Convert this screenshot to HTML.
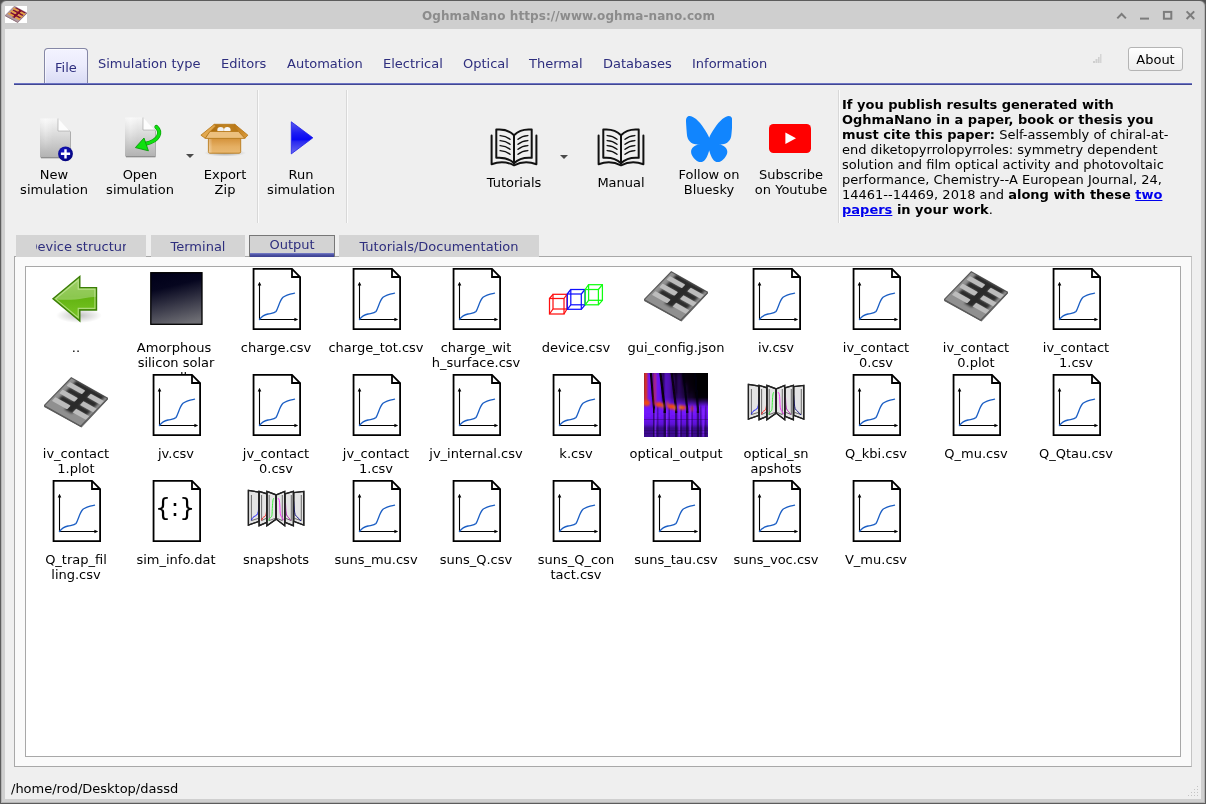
<!DOCTYPE html>
<html lang="en">
<head>
<meta charset="utf-8">
<title>OghmaNano</title>
<style>
html,body{margin:0;padding:0;}
body{width:1206px;height:804px;overflow:hidden;background:#505050;font-family:"DejaVu Sans","Liberation Sans",sans-serif;font-size:13px;color:#000;position:relative;}
#frame{position:absolute;left:0;top:0;width:1206px;height:804px;box-sizing:border-box;background:#cfcfcf;border:1px solid #5c5c5c;border-radius:6px 6px 0 0;box-shadow:inset 1px 0 0 #b4b4b4,inset -1px 0 0 #b4b4b4,inset 0 -1px 0 #b4b4b4;}
#content{position:absolute;left:5px;top:29px;width:1196px;height:770px;background:#efefef;}
#title{position:absolute;left:422px;top:8px;letter-spacing:0.078px;text-align:left;font-weight:bold;font-size:12px;color:#8c8c8c;line-height:16px;white-space:nowrap;}
.mt{position:absolute;top:56px;font-size:13px;color:#2e2e7e;line-height:16px;white-space:nowrap;}
#filetab{position:absolute;left:44px;top:48px;width:44px;height:36px;box-sizing:border-box;border:1px solid #8587a6;border-bottom:none;border-radius:4px 4px 0 0;background:linear-gradient(#f3f3ff,#ececfc 45%,#d9dbf5);box-shadow:inset 1px 1px 0 rgba(255,255,255,0.6);}
#blueline{position:absolute;left:14px;top:83px;width:1178px;height:2px;background:linear-gradient(#6d75c4,#6d75c4 50%,#414792 50%);}
#about{position:absolute;left:1128px;top:47px;width:55px;height:24px;box-sizing:border-box;border:1px solid #b4b4b4;border-radius:3px;background:linear-gradient(#ffffff,#ededed);text-align:center;line-height:23px;font-size:13px;}
.tl{position:absolute;text-align:center;font-size:13px;line-height:15px;white-space:nowrap;transform:translateX(-50%);}
.vsep{position:absolute;top:90px;width:1px;height:133px;background:#d8d8d8;border-right:1px solid #fbfbfb;}
.dd{position:absolute;width:0;height:0;border-left:4px solid transparent;border-right:4px solid transparent;border-top:4px solid #4a4a4a;}
#cite{position:absolute;left:842px;top:97px;width:345px;font-size:13px;line-height:15px;}
#cite a{color:#0000ee;font-weight:bold;text-decoration:underline;}
.tab{position:absolute;z-index:2;top:235px;height:22px;background:#d4d4d4;color:#2e2e7e;text-align:center;font-size:13px;line-height:24px;overflow:hidden;white-space:nowrap;}
#outtab{z-index:3;top:235px;height:22px;box-sizing:border-box;border:1px solid #777;border-bottom:none;line-height:17px;background:#d3d3d3;}
#outtab:after{content:"";position:absolute;left:0;right:0;bottom:0;height:4px;background:linear-gradient(#7c83cc,#4b51a2 45%,#3b4090);}
.clipt{display:inline-block;width:90.4px;margin-left:0.6px;overflow:hidden;vertical-align:top;text-indent:-8.6px;}
#panel{position:absolute;left:14px;top:256px;width:1178px;height:511px;box-sizing:border-box;border:1px solid #a8a8a8;border-right-color:#c4c4c4;background:#fafafa;}
#list{position:absolute;left:25px;top:266px;width:1156px;height:491px;box-sizing:border-box;border:1px solid #a8a8a8;background:#fff;}
.fl{position:absolute;width:100px;height:34px;text-align:center;font-size:13px;line-height:15px;overflow:hidden;white-space:normal;}
.ic{position:absolute;}
#status{position:absolute;left:11px;top:781px;font-size:13px;line-height:16px;}
#root{position:absolute;left:0;top:0;width:1206px;height:804px;will-change:transform;}
</style>
</head>
<body>
<div id="root">
<div id="frame"></div>
<div id="content"></div>
<div class="ic" style="left:5px;top:6px;"><svg width="22" height="17" viewBox="0 4.4 64 50.6" preserveAspectRatio="none" style="display:block;background:#fff"><defs><filter id="tcb38" x="-20%" y="-20%" width="140%" height="140%"><feGaussianBlur stdDeviation="0.022"/></filter><clipPath id="tcc38"><rect x="0" y="0" width="1" height="1"/></clipPath></defs><g transform="matrix(36.5 20.5 -27.1 27.9 27.3 4.8)"><rect x="0" y="0" width="1" height="1" fill="#b29aa0" stroke="#6e4a56" stroke-width="0.03"/><g clip-path="url(#tcc38)"><g filter="url(#tcb38)" fill="#7e102e"><rect x="0.43" y="0.02" width="0.2" height="0.8"/><rect x="0.14" y="0.0" width="0.78" height="0.13"/><rect x="0.14" y="0.24" width="0.78" height="0.16"/><rect x="0.14" y="0.52" width="0.78" height="0.15"/></g></g><g fill="#e8a040"><rect x="0.05" y="0.115" width="0.42" height="0.13" rx="0.02"/><rect x="0.05" y="0.385" width="0.42" height="0.13" rx="0.02"/><rect x="0.05" y="0.655" width="0.42" height="0.13" rx="0.02"/><rect x="0.62" y="0.115" width="0.36" height="0.13"/><rect x="0.62" y="0.385" width="0.36" height="0.13"/><rect x="0.62" y="0.655" width="0.36" height="0.13"/></g></g><path d="M0.2 32.7L37.5 53.2L63.8 25.3V26.6L37.5 54.6L0.2 34Z" fill="#6e4a56"/></svg></div>
<div id="title">OghmaNano https://www.oghma-nano.com</div>
<svg class="ic" style="left:1112px;top:6px;" width="90" height="18" viewBox="0 0 90 18"><g fill="none" stroke="#7c7c7c" stroke-width="2"><path d="M5.3 12.4L9.6 8L13.9 12.4"/><path d="M28 12.6H37"/><rect x="51.9" y="5.9" width="7.4" height="6.8"/><path d="M74.6 5.4L82.2 13M82.2 5.4L74.6 13"/></g></svg>

<div id="filetab"></div>
<div class="mt" style="left:55px;top:60px;">File</div>
<div class="mt" style="left:98px;">Simulation type</div>
<div class="mt" style="left:221px;">Editors</div>
<div class="mt" style="left:287px;">Automation</div>
<div class="mt" style="left:383px;">Electrical</div>
<div class="mt" style="left:463px;">Optical</div>
<div class="mt" style="left:529px;">Thermal</div>
<div class="mt" style="left:603px;">Databases</div>
<div class="mt" style="left:692px;">Information</div>
<div id="blueline"></div>
<svg class="ic" style="left:1092px;top:53px;" width="11" height="11" viewBox="0 0 11 11"><g fill="#cfcfcf"><rect x="1" y="8" width="2" height="2"/><rect x="3.5" y="6" width="2" height="4"/><rect x="6" y="4" width="1.6" height="6"/><rect x="8.2" y="1" width="1.2" height="9"/></g></svg>
<div id="about">About</div>

<div class="tl" style="left:54px;top:167px;">New<br>simulation</div>
<div class="tl" style="left:140px;top:167px;">Open<br>simulation</div>
<div class="tl" style="left:225px;top:167px;">Export<br>Zip</div>
<div class="tl" style="left:301px;top:167px;">Run<br>simulation</div>
<div class="tl" style="left:514px;top:175px;">Tutorials</div>
<div class="tl" style="left:621px;top:175px;">Manual</div>
<div class="tl" style="left:709px;top:167px;">Follow on<br>Bluesky</div>
<div class="tl" style="left:791px;top:167px;">Subscribe<br>on Youtube</div>
<div class="vsep" style="left:257px;"></div>
<div class="vsep" style="left:346px;"></div>
<div class="vsep" style="left:838px;"></div>
<div class="ic" style="left:36px;top:114px;"><svg width="44" height="50" viewBox="0 0 44 50" style="display:block;"><defs><linearGradient id="ndg32" x1="0" y1="0" x2="0" y2="1"><stop offset="0" stop-color="#f6f6f6"/><stop offset="0.3" stop-color="#e2e2e2"/><stop offset="1" stop-color="#b2b2b2"/></linearGradient><linearGradient id="ndh32" x1="0" y1="0" x2="1" y2="0"><stop offset="0" stop-color="#fff" stop-opacity="0.0"/><stop offset="0.3" stop-color="#fff" stop-opacity="0.5"/><stop offset="0.75" stop-color="#fff" stop-opacity="0"/></linearGradient><linearGradient id="ndv32" x1="0" y1="0" x2="0" y2="1"><stop offset="0" stop-color="#fff"/><stop offset="0.75" stop-color="#000"/></linearGradient><mask id="ndm32"><rect x="0" y="0" width="44" height="50" fill="url(#ndv32)"/></mask><filter id="nds32" x="-20%" y="-20%" width="140%" height="140%"><feGaussianBlur stdDeviation="0.5"/></filter></defs><path d="M4.5 5H22L34 17V43.5H4.5Z" fill="#000" opacity="0.55" filter="url(#nds32)" transform="translate(0.5 0.7)"/><path d="M4 4.5H22L34 17V43.5H4Z" fill="url(#ndg32)"/><path d="M4 4.5H22V43.5H4Z" fill="url(#ndh32)" mask="url(#ndm32)"/><path d="M22 4.5V17H34Z" fill="#fdfdfd"/><path d="M22 4.5V17H34" fill="none" stroke="#8a8a8a" stroke-width="0.8" opacity="0.6"/><defs><radialGradient id="ndc32" cx="0.4" cy="0.35" r="0.7"><stop offset="0" stop-color="#1818c8"/><stop offset="1" stop-color="#020278"/></radialGradient></defs><circle cx="29.5" cy="39.8" r="7.4" fill="url(#ndc32)"/><path d="M29.5 35.2V44.4M24.9 39.8H34.1" stroke="#fff" stroke-width="2.4" stroke-linecap="butt"/></svg></div>
<div class="ic" style="left:121px;top:113px;"><svg width="44" height="50" viewBox="0 0 44 50" style="display:block;"><defs><linearGradient id="odg33" x1="0" y1="0" x2="0" y2="1"><stop offset="0" stop-color="#f6f6f6"/><stop offset="0.3" stop-color="#e2e2e2"/><stop offset="1" stop-color="#b2b2b2"/></linearGradient><linearGradient id="odh33" x1="0" y1="0" x2="1" y2="0"><stop offset="0" stop-color="#fff" stop-opacity="0.0"/><stop offset="0.3" stop-color="#fff" stop-opacity="0.5"/><stop offset="0.75" stop-color="#fff" stop-opacity="0"/></linearGradient><linearGradient id="odv33" x1="0" y1="0" x2="0" y2="1"><stop offset="0" stop-color="#fff"/><stop offset="0.75" stop-color="#000"/></linearGradient><mask id="odm33"><rect x="0" y="0" width="44" height="50" fill="url(#odv33)"/></mask><filter id="ods33" x="-20%" y="-20%" width="140%" height="140%"><feGaussianBlur stdDeviation="0.5"/></filter></defs><path d="M4.5 5H22L34 17V43.5H4.5Z" fill="#000" opacity="0.55" filter="url(#ods33)" transform="translate(0.5 0.7)"/><path d="M4 4.5H22L34 17V43.5H4Z" fill="url(#odg33)"/><path d="M4 4.5H22V43.5H4Z" fill="url(#odh33)" mask="url(#odm33)"/><path d="M22 4.5V17H34Z" fill="#fdfdfd"/><path d="M22 4.5V17H34" fill="none" stroke="#8a8a8a" stroke-width="0.8" opacity="0.6"/><path d="M35.4 14C40.8 19 38.6 27.6 24.5 30.8" fill="none" stroke="#0a9a0a" stroke-width="4.1" stroke-linecap="round"/><path d="M35.4 14C40.8 19 38.6 27.6 24.5 30.8" fill="none" stroke="#10e010" stroke-width="2.9" stroke-linecap="round"/><path d="M14.4 34.6L23 25L27.4 37.8Z" fill="#10e010" stroke="#0a9a0a" stroke-width="0.9" stroke-linejoin="round"/></svg></div>
<div class="ic" style="left:199px;top:120px;"><svg width="52" height="40" viewBox="0 0 52 40" style="display:block;"><defs><linearGradient id="bxg34" x1="0" y1="0" x2="0" y2="1"><stop offset="0" stop-color="#d4923a"/><stop offset="0.55" stop-color="#e4ae62"/><stop offset="1" stop-color="#e9b972"/></linearGradient><linearGradient id="bxi34" x1="0" y1="0" x2="1" y2="0"><stop offset="0" stop-color="#a9690c"/><stop offset="0.5" stop-color="#c08220"/><stop offset="1" stop-color="#b87818"/></linearGradient><linearGradient id="bxr34" x1="0" y1="0" x2="1" y2="1"><stop offset="0" stop-color="#b87414"/><stop offset="1" stop-color="#dc9c3c"/></linearGradient><linearGradient id="bxl34" x1="0" y1="0" x2="1" y2="0"><stop offset="0" stop-color="#fff" stop-opacity="0.35"/><stop offset="0.12" stop-color="#fff" stop-opacity="0"/></linearGradient><radialGradient id="bxs34" cx="0.5" cy="0.5" r="0.5"><stop offset="0" stop-color="#000" stop-opacity="0.32"/><stop offset="1" stop-color="#000" stop-opacity="0"/></radialGradient></defs><ellipse cx="26" cy="33" rx="21" ry="3.6" fill="url(#bxs34)"/><path d="M15.3 4.3H35.8L40 12.5H10.5Z" fill="url(#bxi34)" stroke="#b87a1c" stroke-width="0.9" stroke-linejoin="round"/><ellipse cx="21.6" cy="9.9" rx="3.3" ry="2.9" fill="#f0f0f0"/><ellipse cx="28.3" cy="9.9" rx="3.3" ry="2.9" fill="#f8f8f8"/><path d="M15.3 4.3L1.9 15.2L6.3 18.3L11.2 11.5L16.6 6.2Z" fill="#e2a84e" stroke="#b87a1c" stroke-width="0.9" stroke-linejoin="round"/><path d="M35.8 4.3L48.9 15.2L45.8 18.3L39.3 11.5L34.6 6.2Z" fill="url(#bxr34)" stroke="#b87a1c" stroke-width="0.9" stroke-linejoin="round"/><path d="M9.4 18.2H41.7V31.6Q41.7 33.2 40.1 33.2H11Q9.4 33.2 9.4 31.6Z" fill="url(#bxg34)" stroke="#b87a1c" stroke-width="0.9"/><path d="M9.9 18.7H41.2V32.7H9.9Z" fill="url(#bxl34)"/><path d="M10.9 11.5H39.5L45.8 18.4H6.3Z" fill="#ecc07e" stroke="#b87a1c" stroke-width="0.9" stroke-linejoin="round"/></svg></div>
<div class="ic" style="left:289.5px;top:120px;"><svg width="26" height="36" viewBox="0 0 26 36" style="display:block;"><defs><linearGradient id="rg35" x1="0" y1="0" x2="0" y2="1"><stop offset="0" stop-color="#5a5aee"/><stop offset="0.35" stop-color="#1c1cf2"/><stop offset="0.55" stop-color="#0808f4"/><stop offset="0.62" stop-color="#2a2af0"/><stop offset="1" stop-color="#6a6af0"/></linearGradient></defs><path d="M1.3 1.8L22.9 17.8L1.3 33.9Z" fill="url(#rg35)" stroke="#2020e8" stroke-width="0.8" stroke-linejoin="round"/></svg></div>
<div class="ic" style="left:490px;top:127.5px;"><svg width="48" height="39" viewBox="0 0 48 39" style="display:block;"><g fill="none" stroke="#111" stroke-width="2" stroke-linejoin="round" stroke-linecap="round"><path d="M1.6 7.5V36.2C9 33.6 17 33.8 24 37.3C31 33.8 39 33.6 46.4 36.2V7.5"/><path d="M24 7.2C19.5 2.6 13 0.9 6.3 1.6V29.8C13 29.2 19.5 30.8 24 35.2C28.5 30.8 35 29.2 41.7 29.8V1.6C35 0.9 28.5 2.6 24 7.2Z"/><path d="M24 7.2V35.2"/></g><g fill="none" stroke="#111" stroke-width="1.45" stroke-linecap="round"><path d="M10.2 7.6C14 7.8 17.2 9 20 11.2M10.2 12.6C14 12.8 17.2 14 20 16.2M10.2 17.6C14 17.8 17.2 19 20 21.2M10.2 22.6C14 22.8 17.2 24 20 26.2"/><path d="M37.8 7.6C34 7.8 30.8 9 28 11.2M37.8 12.6C34 12.8 30.8 14 28 16.2M37.8 17.6C34 17.8 30.8 19 28 21.2M37.8 22.6C34 22.8 30.8 24 28 26.2"/></g></svg></div>
<div class="ic" style="left:597px;top:127.5px;"><svg width="48" height="39" viewBox="0 0 48 39" style="display:block;"><g fill="none" stroke="#111" stroke-width="2" stroke-linejoin="round" stroke-linecap="round"><path d="M1.6 7.5V36.2C9 33.6 17 33.8 24 37.3C31 33.8 39 33.6 46.4 36.2V7.5"/><path d="M24 7.2C19.5 2.6 13 0.9 6.3 1.6V29.8C13 29.2 19.5 30.8 24 35.2C28.5 30.8 35 29.2 41.7 29.8V1.6C35 0.9 28.5 2.6 24 7.2Z"/><path d="M24 7.2V35.2"/></g><g fill="none" stroke="#111" stroke-width="1.45" stroke-linecap="round"><path d="M10.2 7.6C14 7.8 17.2 9 20 11.2M10.2 12.6C14 12.8 17.2 14 20 16.2M10.2 17.6C14 17.8 17.2 19 20 21.2M10.2 22.6C14 22.8 17.2 24 20 26.2"/><path d="M37.8 7.6C34 7.8 30.8 9 28 11.2M37.8 12.6C34 12.8 30.8 14 28 16.2M37.8 17.6C34 17.8 30.8 19 28 21.2M37.8 22.6C34 22.8 30.8 24 28 26.2"/></g></svg></div>
<div class="ic" style="left:685.6px;top:116px;"><svg width="46.4" height="46.3" viewBox="0 0 568 501" preserveAspectRatio="none" style="display:block"><path fill="#1185fe" d="M123.121 33.664C188.241 82.553 258.281 181.68 284 234.873c25.719-53.192 95.759-152.32 160.879-201.21C491.866-1.611 568-28.906 568 57.947c0 17.346-9.945 145.713-15.778 166.555-20.275 72.453-94.155 90.933-159.875 79.748C507.222 323.8 536.444 388.56 473.333 453.32c-119.86 122.992-172.272-30.859-185.702-70.281-2.462-7.227-3.614-10.608-3.631-7.733-.017-2.875-1.169.506-3.631 7.733-13.43 39.422-65.842 193.273-185.702 70.281-63.111-64.76-33.89-129.52 80.986-149.071-65.72 11.185-139.6-7.295-159.875-79.748C9.945 203.659 0 75.291 0 57.946 0-28.906 76.135-1.612 123.121 33.664Z"/></svg></div>
<div class="ic" style="left:769px;top:124px;"><svg width="42" height="29" viewBox="0 0 42 29" style="display:block;"><rect x="0" y="0" width="42" height="29" rx="4.5" fill="#ff0000"/><path d="M16.4 8.4L27 14.2L16.4 20Z" fill="#fff"/></svg></div>
<div class="dd" style="left:186px;top:154px;"></div><div class="dd" style="left:560px;top:155px;"></div>

<div id="cite"><b>If you publish results generated with OghmaNano in a paper, book or thesis you must cite this paper:</b> Self-assembly of chiral-at-end diketopyrrolopyrroles: symmetry dependent solution and film optical activity and photovoltaic performance, Chemistry--A European Journal, 24, 14461--14469, 2018 and <b>along with these <a>two papers</a> in your work</b>.</div>

<div class="tab" style="left:16px;width:130px;"><span class="clipt">Device structure</span></div>
<div class="tab" style="left:151px;width:94px;">Terminal</div>
<div class="tab" id="outtab" style="left:249px;width:86px;">Output</div>
<div class="tab" style="left:339px;width:200px;">Tutorials/Documentation</div>
<div id="panel"></div>
<div id="list"></div>

<div class="ic" style="left:44px;top:267px;"><svg width="64" height="64" viewBox="0 0 64 64" style="display:block;"><defs><linearGradient id="bkg1" x1="0" y1="0" x2="0" y2="1"><stop offset="0" stop-color="#7cc030"/><stop offset="0.45" stop-color="#62b310"/><stop offset="1" stop-color="#7cc828"/></linearGradient><radialGradient id="bks1" cx="0.5" cy="0.5" r="0.5"><stop offset="0" stop-color="#000" stop-opacity="0.24"/><stop offset="0.6" stop-color="#000" stop-opacity="0.1"/><stop offset="1" stop-color="#000" stop-opacity="0"/></radialGradient><clipPath id="bkc1"><path d="M9 31.8L35.8 9.5V20.6H52.5V43H35.8V54Z"/></clipPath></defs><ellipse cx="35" cy="48.5" rx="23" ry="7.5" fill="url(#bks1)"/><path d="M9 31.8L35.8 9.5V20.6H52.5V43H35.8V54Z" fill="url(#bkg1)"/><path d="M0 0H64V30.2C56 29.2 48 29.6 40 31.2C31 33 20 33.4 6 31.9Z" fill="#fff" opacity="0.27" clip-path="url(#bkc1)"/><path d="M9 31.8L35.8 9.5V20.6H52.5V43H35.8V54Z" fill="none" stroke="#3a7d06" stroke-width="1.4" stroke-linejoin="miter"/><path d="M11.6 31.8L34.2 13V22.2H50.9V41.4H34.2V50.6Z" fill="none" stroke="#c8e8a0" stroke-opacity="0.7" stroke-width="1.1"/></svg></div>
<div class="fl" style="left:26px;top:340px;">..</div>
<div class="ic" style="left:144px;top:267px;"><svg width="64" height="64" viewBox="0 0 64 64" style="display:block;"><defs><linearGradient id="slg2" x1="0.38" y1="0" x2="0.62" y2="1"><stop offset="0" stop-color="#01011a"/><stop offset="0.25" stop-color="#06061f"/><stop offset="1" stop-color="#6e6e74"/></linearGradient></defs><rect x="6.8" y="5.7" width="51.2" height="51.6" fill="url(#slg2)" stroke="#000" stroke-width="1.3"/></svg></div>
<div class="fl" style="left:126px;top:340px;"><span style="position:relative;left:-2px">Amorphous</span> silicon solar cell</div>
<div class="ic" style="left:244px;top:267px;"><svg width="64" height="64" viewBox="0 0 64 64" style="display:block;"><path d="M9.55 1.9H48L56.1 10V62.1H9.55Z" fill="#fff" stroke="#000" stroke-width="1.8" stroke-linejoin="miter"/><path d="M48 1.9V10H56.1" fill="none" stroke="#000" stroke-width="1.8"/><path d="M15.5 17V52.5H52" fill="none" stroke="#000" stroke-width="1.1"/><path d="M15.5 14.8L17.3 18.6H13.7Z M54.2 52.5L50.4 54.3V50.7Z" fill="#000"/><path d="M15.5 52.5C18 49 21 47.6 24 47C28 46.2 30.5 46.2 32 44.5C34.5 41 35.5 33.5 39 30.3C42 27.6 46 27 50.5 26.2" fill="none" stroke="#1c5fc4" stroke-width="1.3" stroke-linecap="round"/></svg></div>
<div class="fl" style="left:226px;top:340px;">charge.csv</div>
<div class="ic" style="left:344px;top:267px;"><svg width="64" height="64" viewBox="0 0 64 64" style="display:block;"><path d="M9.55 1.9H48L56.1 10V62.1H9.55Z" fill="#fff" stroke="#000" stroke-width="1.8" stroke-linejoin="miter"/><path d="M48 1.9V10H56.1" fill="none" stroke="#000" stroke-width="1.8"/><path d="M15.5 17V52.5H52" fill="none" stroke="#000" stroke-width="1.1"/><path d="M15.5 14.8L17.3 18.6H13.7Z M54.2 52.5L50.4 54.3V50.7Z" fill="#000"/><path d="M15.5 52.5C18 49 21 47.6 24 47C28 46.2 30.5 46.2 32 44.5C34.5 41 35.5 33.5 39 30.3C42 27.6 46 27 50.5 26.2" fill="none" stroke="#1c5fc4" stroke-width="1.3" stroke-linecap="round"/></svg></div>
<div class="fl" style="left:326px;top:340px;">charge_tot.csv</div>
<div class="ic" style="left:444px;top:267px;"><svg width="64" height="64" viewBox="0 0 64 64" style="display:block;"><path d="M9.55 1.9H48L56.1 10V62.1H9.55Z" fill="#fff" stroke="#000" stroke-width="1.8" stroke-linejoin="miter"/><path d="M48 1.9V10H56.1" fill="none" stroke="#000" stroke-width="1.8"/><path d="M15.5 17V52.5H52" fill="none" stroke="#000" stroke-width="1.1"/><path d="M15.5 14.8L17.3 18.6H13.7Z M54.2 52.5L50.4 54.3V50.7Z" fill="#000"/><path d="M15.5 52.5C18 49 21 47.6 24 47C28 46.2 30.5 46.2 32 44.5C34.5 41 35.5 33.5 39 30.3C42 27.6 46 27 50.5 26.2" fill="none" stroke="#1c5fc4" stroke-width="1.3" stroke-linecap="round"/></svg></div>
<div class="fl" style="left:426px;top:340px;">charge_wit<wbr>h_surface.csv</div>
<div class="ic" style="left:544px;top:267px;"><svg width="64" height="64" viewBox="0 0 64 64" style="display:block;"><g fill="none" stroke-width="1.25"><g stroke="#ff1010"><rect x="5.5" y="31.5" width="14.5" height="15.5"/><rect x="9" y="27.3" width="14" height="14.7"/><path d="M5.5 31.5L9 27.3M20 31.5L23 27.3M5.5 47L9 42M20 47L23 42"/></g><g stroke="#1010ff"><rect x="23.3" y="27" width="14" height="15.3"/><rect x="26.8" y="22.5" width="14.2" height="15.3"/><path d="M23.3 27L26.8 22.5M37.3 27L41 22.5M23.3 42.3L26.8 37.8M37.3 42.3L41 37.8"/></g><g stroke="#10ff10"><rect x="41.2" y="22.5" width="13.2" height="15.3"/><rect x="44.6" y="17.7" width="13.8" height="15.6"/><path d="M41.2 22.5L44.6 17.7M54.4 22.5L58.4 17.7M41.2 37.8L44.6 33.3M54.4 37.8L58.4 33.3"/></g></g></svg></div>
<div class="fl" style="left:526px;top:340px;">device.csv</div>
<div class="ic" style="left:644px;top:267px;"><svg width="64" height="64" viewBox="0 0 64 64" style="display:block;"><defs><filter id="cgb7" x="-20%" y="-20%" width="140%" height="140%"><feGaussianBlur stdDeviation="0.022"/></filter><clipPath id="cgc7"><rect x="0" y="0" width="1" height="1"/></clipPath></defs><g transform="matrix(36.5 20.5 -27.1 27.9 27.3 4.8)"><rect x="0" y="0" width="1" height="1" fill="#909090" stroke="#5a5a5a" stroke-width="0.03"/><g clip-path="url(#cgc7)"><g filter="url(#cgb7)" fill="#2c2c2c"><rect x="0.43" y="0.02" width="0.2" height="0.8"/><rect x="0.14" y="0.0" width="0.78" height="0.13"/><rect x="0.14" y="0.24" width="0.78" height="0.16"/><rect x="0.14" y="0.52" width="0.78" height="0.15"/></g></g><g fill="#bcbcbc"><rect x="0.05" y="0.115" width="0.42" height="0.13" rx="0.02"/><rect x="0.05" y="0.385" width="0.42" height="0.13" rx="0.02"/><rect x="0.05" y="0.655" width="0.42" height="0.13" rx="0.02"/><rect x="0.62" y="0.115" width="0.36" height="0.13"/><rect x="0.62" y="0.385" width="0.36" height="0.13"/><rect x="0.62" y="0.655" width="0.36" height="0.13"/></g></g><path d="M0.2 32.7L37.5 53.2L63.8 25.3V26.6L37.5 54.6L0.2 34Z" fill="#5a5a5a"/></svg></div>
<div class="fl" style="left:626px;top:340px;">gui_config.json</div>
<div class="ic" style="left:744px;top:267px;"><svg width="64" height="64" viewBox="0 0 64 64" style="display:block;"><path d="M9.55 1.9H48L56.1 10V62.1H9.55Z" fill="#fff" stroke="#000" stroke-width="1.8" stroke-linejoin="miter"/><path d="M48 1.9V10H56.1" fill="none" stroke="#000" stroke-width="1.8"/><path d="M15.5 17V52.5H52" fill="none" stroke="#000" stroke-width="1.1"/><path d="M15.5 14.8L17.3 18.6H13.7Z M54.2 52.5L50.4 54.3V50.7Z" fill="#000"/><path d="M15.5 52.5C18 49 21 47.6 24 47C28 46.2 30.5 46.2 32 44.5C34.5 41 35.5 33.5 39 30.3C42 27.6 46 27 50.5 26.2" fill="none" stroke="#1c5fc4" stroke-width="1.3" stroke-linecap="round"/></svg></div>
<div class="fl" style="left:726px;top:340px;">iv.csv</div>
<div class="ic" style="left:844px;top:267px;"><svg width="64" height="64" viewBox="0 0 64 64" style="display:block;"><path d="M9.55 1.9H48L56.1 10V62.1H9.55Z" fill="#fff" stroke="#000" stroke-width="1.8" stroke-linejoin="miter"/><path d="M48 1.9V10H56.1" fill="none" stroke="#000" stroke-width="1.8"/><path d="M15.5 17V52.5H52" fill="none" stroke="#000" stroke-width="1.1"/><path d="M15.5 14.8L17.3 18.6H13.7Z M54.2 52.5L50.4 54.3V50.7Z" fill="#000"/><path d="M15.5 52.5C18 49 21 47.6 24 47C28 46.2 30.5 46.2 32 44.5C34.5 41 35.5 33.5 39 30.3C42 27.6 46 27 50.5 26.2" fill="none" stroke="#1c5fc4" stroke-width="1.3" stroke-linecap="round"/></svg></div>
<div class="fl" style="left:826px;top:340px;">iv_contact<wbr>0.csv</div>
<div class="ic" style="left:944px;top:267px;"><svg width="64" height="64" viewBox="0 0 64 64" style="display:block;"><defs><filter id="cgb10" x="-20%" y="-20%" width="140%" height="140%"><feGaussianBlur stdDeviation="0.022"/></filter><clipPath id="cgc10"><rect x="0" y="0" width="1" height="1"/></clipPath></defs><g transform="matrix(36.5 20.5 -27.1 27.9 27.3 4.8)"><rect x="0" y="0" width="1" height="1" fill="#909090" stroke="#5a5a5a" stroke-width="0.03"/><g clip-path="url(#cgc10)"><g filter="url(#cgb10)" fill="#2c2c2c"><rect x="0.43" y="0.02" width="0.2" height="0.8"/><rect x="0.14" y="0.0" width="0.78" height="0.13"/><rect x="0.14" y="0.24" width="0.78" height="0.16"/><rect x="0.14" y="0.52" width="0.78" height="0.15"/></g></g><g fill="#bcbcbc"><rect x="0.05" y="0.115" width="0.42" height="0.13" rx="0.02"/><rect x="0.05" y="0.385" width="0.42" height="0.13" rx="0.02"/><rect x="0.05" y="0.655" width="0.42" height="0.13" rx="0.02"/><rect x="0.62" y="0.115" width="0.36" height="0.13"/><rect x="0.62" y="0.385" width="0.36" height="0.13"/><rect x="0.62" y="0.655" width="0.36" height="0.13"/></g></g><path d="M0.2 32.7L37.5 53.2L63.8 25.3V26.6L37.5 54.6L0.2 34Z" fill="#5a5a5a"/></svg></div>
<div class="fl" style="left:926px;top:340px;">iv_contact<wbr>0.plot</div>
<div class="ic" style="left:1044px;top:267px;"><svg width="64" height="64" viewBox="0 0 64 64" style="display:block;"><path d="M9.55 1.9H48L56.1 10V62.1H9.55Z" fill="#fff" stroke="#000" stroke-width="1.8" stroke-linejoin="miter"/><path d="M48 1.9V10H56.1" fill="none" stroke="#000" stroke-width="1.8"/><path d="M15.5 17V52.5H52" fill="none" stroke="#000" stroke-width="1.1"/><path d="M15.5 14.8L17.3 18.6H13.7Z M54.2 52.5L50.4 54.3V50.7Z" fill="#000"/><path d="M15.5 52.5C18 49 21 47.6 24 47C28 46.2 30.5 46.2 32 44.5C34.5 41 35.5 33.5 39 30.3C42 27.6 46 27 50.5 26.2" fill="none" stroke="#1c5fc4" stroke-width="1.3" stroke-linecap="round"/></svg></div>
<div class="fl" style="left:1026px;top:340px;">iv_contact<wbr>1.csv</div>
<div class="ic" style="left:44px;top:373px;"><svg width="64" height="64" viewBox="0 0 64 64" style="display:block;"><defs><filter id="cgb12" x="-20%" y="-20%" width="140%" height="140%"><feGaussianBlur stdDeviation="0.022"/></filter><clipPath id="cgc12"><rect x="0" y="0" width="1" height="1"/></clipPath></defs><g transform="matrix(36.5 20.5 -27.1 27.9 27.3 4.8)"><rect x="0" y="0" width="1" height="1" fill="#909090" stroke="#5a5a5a" stroke-width="0.03"/><g clip-path="url(#cgc12)"><g filter="url(#cgb12)" fill="#2c2c2c"><rect x="0.43" y="0.02" width="0.2" height="0.8"/><rect x="0.14" y="0.0" width="0.78" height="0.13"/><rect x="0.14" y="0.24" width="0.78" height="0.16"/><rect x="0.14" y="0.52" width="0.78" height="0.15"/></g></g><g fill="#bcbcbc"><rect x="0.05" y="0.115" width="0.42" height="0.13" rx="0.02"/><rect x="0.05" y="0.385" width="0.42" height="0.13" rx="0.02"/><rect x="0.05" y="0.655" width="0.42" height="0.13" rx="0.02"/><rect x="0.62" y="0.115" width="0.36" height="0.13"/><rect x="0.62" y="0.385" width="0.36" height="0.13"/><rect x="0.62" y="0.655" width="0.36" height="0.13"/></g></g><path d="M0.2 32.7L37.5 53.2L63.8 25.3V26.6L37.5 54.6L0.2 34Z" fill="#5a5a5a"/></svg></div>
<div class="fl" style="left:26px;top:446px;">iv_contact<wbr>1.plot</div>
<div class="ic" style="left:144px;top:373px;"><svg width="64" height="64" viewBox="0 0 64 64" style="display:block;"><path d="M9.55 1.9H48L56.1 10V62.1H9.55Z" fill="#fff" stroke="#000" stroke-width="1.8" stroke-linejoin="miter"/><path d="M48 1.9V10H56.1" fill="none" stroke="#000" stroke-width="1.8"/><path d="M15.5 17V52.5H52" fill="none" stroke="#000" stroke-width="1.1"/><path d="M15.5 14.8L17.3 18.6H13.7Z M54.2 52.5L50.4 54.3V50.7Z" fill="#000"/><path d="M15.5 52.5C18 49 21 47.6 24 47C28 46.2 30.5 46.2 32 44.5C34.5 41 35.5 33.5 39 30.3C42 27.6 46 27 50.5 26.2" fill="none" stroke="#1c5fc4" stroke-width="1.3" stroke-linecap="round"/></svg></div>
<div class="fl" style="left:126px;top:446px;">jv.csv</div>
<div class="ic" style="left:244px;top:373px;"><svg width="64" height="64" viewBox="0 0 64 64" style="display:block;"><path d="M9.55 1.9H48L56.1 10V62.1H9.55Z" fill="#fff" stroke="#000" stroke-width="1.8" stroke-linejoin="miter"/><path d="M48 1.9V10H56.1" fill="none" stroke="#000" stroke-width="1.8"/><path d="M15.5 17V52.5H52" fill="none" stroke="#000" stroke-width="1.1"/><path d="M15.5 14.8L17.3 18.6H13.7Z M54.2 52.5L50.4 54.3V50.7Z" fill="#000"/><path d="M15.5 52.5C18 49 21 47.6 24 47C28 46.2 30.5 46.2 32 44.5C34.5 41 35.5 33.5 39 30.3C42 27.6 46 27 50.5 26.2" fill="none" stroke="#1c5fc4" stroke-width="1.3" stroke-linecap="round"/></svg></div>
<div class="fl" style="left:226px;top:446px;">jv_contact<wbr>0.csv</div>
<div class="ic" style="left:344px;top:373px;"><svg width="64" height="64" viewBox="0 0 64 64" style="display:block;"><path d="M9.55 1.9H48L56.1 10V62.1H9.55Z" fill="#fff" stroke="#000" stroke-width="1.8" stroke-linejoin="miter"/><path d="M48 1.9V10H56.1" fill="none" stroke="#000" stroke-width="1.8"/><path d="M15.5 17V52.5H52" fill="none" stroke="#000" stroke-width="1.1"/><path d="M15.5 14.8L17.3 18.6H13.7Z M54.2 52.5L50.4 54.3V50.7Z" fill="#000"/><path d="M15.5 52.5C18 49 21 47.6 24 47C28 46.2 30.5 46.2 32 44.5C34.5 41 35.5 33.5 39 30.3C42 27.6 46 27 50.5 26.2" fill="none" stroke="#1c5fc4" stroke-width="1.3" stroke-linecap="round"/></svg></div>
<div class="fl" style="left:326px;top:446px;">jv_contact<wbr>1.csv</div>
<div class="ic" style="left:444px;top:373px;"><svg width="64" height="64" viewBox="0 0 64 64" style="display:block;"><path d="M9.55 1.9H48L56.1 10V62.1H9.55Z" fill="#fff" stroke="#000" stroke-width="1.8" stroke-linejoin="miter"/><path d="M48 1.9V10H56.1" fill="none" stroke="#000" stroke-width="1.8"/><path d="M15.5 17V52.5H52" fill="none" stroke="#000" stroke-width="1.1"/><path d="M15.5 14.8L17.3 18.6H13.7Z M54.2 52.5L50.4 54.3V50.7Z" fill="#000"/><path d="M15.5 52.5C18 49 21 47.6 24 47C28 46.2 30.5 46.2 32 44.5C34.5 41 35.5 33.5 39 30.3C42 27.6 46 27 50.5 26.2" fill="none" stroke="#1c5fc4" stroke-width="1.3" stroke-linecap="round"/></svg></div>
<div class="fl" style="left:426px;top:446px;">jv_internal.csv</div>
<div class="ic" style="left:544px;top:373px;"><svg width="64" height="64" viewBox="0 0 64 64" style="display:block;"><path d="M9.55 1.9H48L56.1 10V62.1H9.55Z" fill="#fff" stroke="#000" stroke-width="1.8" stroke-linejoin="miter"/><path d="M48 1.9V10H56.1" fill="none" stroke="#000" stroke-width="1.8"/><path d="M15.5 17V52.5H52" fill="none" stroke="#000" stroke-width="1.1"/><path d="M15.5 14.8L17.3 18.6H13.7Z M54.2 52.5L50.4 54.3V50.7Z" fill="#000"/><path d="M15.5 52.5C18 49 21 47.6 24 47C28 46.2 30.5 46.2 32 44.5C34.5 41 35.5 33.5 39 30.3C42 27.6 46 27 50.5 26.2" fill="none" stroke="#1c5fc4" stroke-width="1.3" stroke-linecap="round"/></svg></div>
<div class="fl" style="left:526px;top:446px;">k.csv</div>
<div class="ic" style="left:644px;top:373px;"><svg width="64" height="64" viewBox="0 0 64 64" style="display:block;"><defs><filter id="ob118" x="-30%" y="-30%" width="160%" height="160%"><feGaussianBlur stdDeviation="0.9"/></filter><filter id="ob418" x="-30%" y="-30%" width="160%" height="160%"><feGaussianBlur stdDeviation="0.55"/></filter><filter id="ob218" x="-30%" y="-30%" width="160%" height="160%"><feGaussianBlur stdDeviation="0.9 3"/></filter><filter id="ob318" x="-30%" y="-30%" width="160%" height="160%"><feGaussianBlur stdDeviation="0.6 1.2"/></filter><linearGradient id="ov18" x1="0" y1="0" x2="0" y2="1"><stop offset="0" stop-color="#12001f"/><stop offset="0.3" stop-color="#1c0338"/><stop offset="0.47" stop-color="#5a12c8"/><stop offset="0.56" stop-color="#7a18ff"/><stop offset="0.72" stop-color="#6a12ee"/><stop offset="0.8" stop-color="#5c10d4"/><stop offset="0.86" stop-color="#3a0a8a"/><stop offset="1" stop-color="#3c0a90"/></linearGradient><linearGradient id="oh18" x1="0" y1="0" x2="1" y2="0"><stop offset="0.2" stop-color="#000" stop-opacity="0"/><stop offset="0.5" stop-color="#000" stop-opacity="0.4"/><stop offset="0.85" stop-color="#000" stop-opacity="0.95"/></linearGradient><linearGradient id="ofade18" x1="0" y1="0" x2="0" y2="1"><stop offset="0" stop-color="#fff"/><stop offset="0.38" stop-color="#fff"/><stop offset="0.52" stop-color="#000"/></linearGradient><mask id="om18"><rect width="64" height="64" fill="url(#ofade18)"/></mask><clipPath id="oc18"><rect width="64" height="64"/></clipPath></defs><g clip-path="url(#oc18)"><rect width="64" height="64" fill="url(#ov18)"/><g filter="url(#ob218)" fill="#7016fa"><rect x="1" y="-4" width="7" height="46" opacity="1"/><rect x="9" y="-4" width="9" height="46" opacity="1"/><rect x="20" y="-4" width="7" height="46" opacity="0.95"/><rect x="26" y="2" width="5" height="40" opacity="0.6"/><rect x="33" y="0" width="5" height="42" opacity="0.6"/><rect x="38" y="12" width="6" height="30" opacity="0.45"/><rect x="46" y="18" width="5" height="24" opacity="0.4"/><rect x="57" y="24" width="5" height="18" opacity="0.4"/></g><rect width="64" height="64" fill="url(#oh18)" mask="url(#om18)"/><g filter="url(#ob418)" fill="#07000e"><path d="M5.6 -2H7.699999999999999L11.1 36V40H9.0V36Z" opacity="1"/><rect x="9.0" y="38" width="2.1" height="28" opacity="0.5"/><path d="M15.0 -2H17.3L21.900000000000002 36V40H19.6V36Z" opacity="1"/><rect x="19.6" y="38" width="2.3" height="28" opacity="0.5"/><path d="M26.4 -2H28.599999999999998L33.2 36V40H31.0V36Z" opacity="0.95"/><rect x="31.0" y="38" width="2.2" height="28" opacity="0.5"/><path d="M38.0 -2H40.2L44.300000000000004 36V40H42.1V36Z" opacity="0.9"/><rect x="42.1" y="38" width="2.2" height="28" opacity="0.5"/><path d="M49.8 -2H52.099999999999994L55.099999999999994 36V40H52.8V36Z" opacity="0.85"/><rect x="52.8" y="38" width="2.3" height="28" opacity="0.5"/></g><g filter="url(#ob318)" fill="#0a0014" opacity="0.33"><rect x="13" y="33" width="1.5" height="34"/><rect x="24.5" y="33" width="1.5" height="34"/><rect x="36.5" y="33" width="1.5" height="34"/><rect x="47.5" y="33" width="1.5" height="34"/><rect x="56" y="33" width="1.5" height="34"/><rect x="61" y="33" width="1.5" height="34"/></g><g filter="url(#ob318)" fill="#8a2aff" opacity="0.75"><rect x="10.5" y="36" width="1.3" height="28"/><rect x="22" y="36" width="1.3" height="28"/><rect x="34.5" y="36" width="1.3" height="28"/><rect x="45.5" y="36" width="1.3" height="28"/><rect x="58.5" y="36" width="1.3" height="28"/></g><g filter="url(#ob118)"><rect x="0" y="-2" width="3.2" height="34" fill="#e83808"/><rect x="10" y="0" width="1.5" height="32" fill="#e03010"/><ellipse cx="2.5" cy="30" rx="3.6" ry="3" fill="#f04a08"/><ellipse cx="15" cy="31.5" rx="3.2" ry="2.6" fill="#f04a08"/><ellipse cx="18.8" cy="33" rx="0.9" ry="3" fill="#f06a10"/><ellipse cx="27.5" cy="33.5" rx="3.6" ry="2.6" fill="#f04a08"/><ellipse cx="30.8" cy="35" rx="0.9" ry="3" fill="#f07a10"/><ellipse cx="23.6" cy="31" rx="0.8" ry="3" fill="#f06010"/><ellipse cx="38.5" cy="34.6" rx="3.2" ry="2.2" fill="#f05008"/><ellipse cx="36" cy="34" rx="0.9" ry="2.6" fill="#f89018"/><ellipse cx="48" cy="35.5" rx="0.9" ry="3" fill="#e84010"/></g><rect x="0" y="46.3" width="64" height="0.6" fill="#200040" opacity="0.55"/><rect x="0" y="57.5" width="64" height="0.5" fill="#180030" opacity="0.4"/><rect x="0" y="60.5" width="64" height="0.5" fill="#180030" opacity="0.4"/></g></svg></div>
<div class="fl" style="left:626px;top:446px;">optical_output</div>
<div class="ic" style="left:744px;top:373px;"><svg width="64" height="64" viewBox="0 0 64 64" style="display:block;"><path d="M4.4 11.4L15.1 13.1L15.1 42.3L4.4 46.0Z" fill="#e4e4e4" stroke="#222" stroke-width="1.3" stroke-linejoin="miter"/><path d="M7.4 16V41.6L14.3 39.4" fill="none" stroke="#4a4a4a" stroke-width="0.8"/><path d="M7.4 41.3C8 39 9.5 37.6 11.5 36.8C13.5 36 14.3 34 14.6 30L15 24" fill="none" stroke="#1414ff" stroke-width="0.95"/><path d="M15.1 12.4L22.9 14.8L22.9 43.3L15.1 46.7Z" fill="#e4e4e4" stroke="#222" stroke-width="1.3" stroke-linejoin="miter"/><path d="M17.6 16V41.6L22.1 39.4" fill="none" stroke="#4a4a4a" stroke-width="0.8"/><path d="M17.6 41.3C18 39.5 19 38.2 20.5 37.6C22 37 22.5 35 22.7 28" fill="none" stroke="#ff1414" stroke-width="0.95"/><path d="M22.9 12.4L31.9 15.8L31.9 40.3L22.9 46.7Z" fill="#e4e4e4" stroke="#222" stroke-width="1.3" stroke-linejoin="miter"/><path d="M25.2 16V41.6L31.1 39.4" fill="none" stroke="#4a4a4a" stroke-width="0.8"/><path d="M24.8 41.6C25.2 39.5 26.5 38.5 27.4 37.8C28.3 37 28.1 32 28.4 28C28.7 23 28.8 20 30 19" fill="none" stroke="#30f030" stroke-width="0.95"/><path d="M32.3 15.8L40.7 12.4L40.7 46.7L32.3 40.3Z" fill="#e4e4e4" stroke="#222" stroke-width="1.3" stroke-linejoin="miter"/><path d="M38.3 16V41.6L33.1 39.4" fill="none" stroke="#4a4a4a" stroke-width="0.8"/><path d="M33.9 19.1C35.3 20 35.6 22 35.8 26C36 30 36 34 36.5 36C37.2 38 39 39 39.7 41.3" fill="none" stroke="#ff30ff" stroke-width="0.95"/><path d="M41.0 14.8L49.4 12.4L49.4 46.7L41.0 43.3Z" fill="#e4e4e4" stroke="#222" stroke-width="1.3" stroke-linejoin="miter"/><path d="M47.3 16V41.6L41.8 39.4" fill="none" stroke="#4a4a4a" stroke-width="0.8"/><path d="M41.5 24C41.8 30 41.9 34 42.6 36C43.5 38 45.5 39 46.4 41.3" fill="none" stroke="#a818a8" stroke-width="0.95"/><path d="M49.7 13.7L59.8 12.4L59.8 46.0L49.7 42.3Z" fill="#e4e4e4" stroke="#222" stroke-width="1.3" stroke-linejoin="miter"/><path d="M57.3 16V41.6L50.5 39.4" fill="none" stroke="#4a4a4a" stroke-width="0.8"/><path d="M49.6 22C50.2 28 50.3 33 51.2 35.8C52.5 38 55.5 39.5 56.8 42" fill="none" stroke="#18188c" stroke-width="0.95"/><path d="M4.4 11.4L15.1 13.1L15.1 42.3L4.4 46.0Z" fill="none" stroke="#222" stroke-width="1.3" stroke-linejoin="miter"/><path d="M15.1 12.4L22.9 14.8L22.9 43.3L15.1 46.7Z" fill="none" stroke="#222" stroke-width="1.3" stroke-linejoin="miter"/><path d="M22.9 12.4L31.9 15.8L31.9 40.3L22.9 46.7Z" fill="none" stroke="#222" stroke-width="1.3" stroke-linejoin="miter"/><path d="M32.3 15.8L40.7 12.4L40.7 46.7L32.3 40.3Z" fill="none" stroke="#222" stroke-width="1.3" stroke-linejoin="miter"/><path d="M41.0 14.8L49.4 12.4L49.4 46.7L41.0 43.3Z" fill="none" stroke="#222" stroke-width="1.3" stroke-linejoin="miter"/><path d="M49.7 13.7L59.8 12.4L59.8 46.0L49.7 42.3Z" fill="none" stroke="#222" stroke-width="1.3" stroke-linejoin="miter"/></svg></div>
<div class="fl" style="left:726px;top:446px;">optical_sn<wbr>apshots</div>
<div class="ic" style="left:844px;top:373px;"><svg width="64" height="64" viewBox="0 0 64 64" style="display:block;"><path d="M9.55 1.9H48L56.1 10V62.1H9.55Z" fill="#fff" stroke="#000" stroke-width="1.8" stroke-linejoin="miter"/><path d="M48 1.9V10H56.1" fill="none" stroke="#000" stroke-width="1.8"/><path d="M15.5 17V52.5H52" fill="none" stroke="#000" stroke-width="1.1"/><path d="M15.5 14.8L17.3 18.6H13.7Z M54.2 52.5L50.4 54.3V50.7Z" fill="#000"/><path d="M15.5 52.5C18 49 21 47.6 24 47C28 46.2 30.5 46.2 32 44.5C34.5 41 35.5 33.5 39 30.3C42 27.6 46 27 50.5 26.2" fill="none" stroke="#1c5fc4" stroke-width="1.3" stroke-linecap="round"/></svg></div>
<div class="fl" style="left:826px;top:446px;">Q_kbi.csv</div>
<div class="ic" style="left:944px;top:373px;"><svg width="64" height="64" viewBox="0 0 64 64" style="display:block;"><path d="M9.55 1.9H48L56.1 10V62.1H9.55Z" fill="#fff" stroke="#000" stroke-width="1.8" stroke-linejoin="miter"/><path d="M48 1.9V10H56.1" fill="none" stroke="#000" stroke-width="1.8"/><path d="M15.5 17V52.5H52" fill="none" stroke="#000" stroke-width="1.1"/><path d="M15.5 14.8L17.3 18.6H13.7Z M54.2 52.5L50.4 54.3V50.7Z" fill="#000"/><path d="M15.5 52.5C18 49 21 47.6 24 47C28 46.2 30.5 46.2 32 44.5C34.5 41 35.5 33.5 39 30.3C42 27.6 46 27 50.5 26.2" fill="none" stroke="#1c5fc4" stroke-width="1.3" stroke-linecap="round"/></svg></div>
<div class="fl" style="left:926px;top:446px;">Q_mu.csv</div>
<div class="ic" style="left:1044px;top:373px;"><svg width="64" height="64" viewBox="0 0 64 64" style="display:block;"><path d="M9.55 1.9H48L56.1 10V62.1H9.55Z" fill="#fff" stroke="#000" stroke-width="1.8" stroke-linejoin="miter"/><path d="M48 1.9V10H56.1" fill="none" stroke="#000" stroke-width="1.8"/><path d="M15.5 17V52.5H52" fill="none" stroke="#000" stroke-width="1.1"/><path d="M15.5 14.8L17.3 18.6H13.7Z M54.2 52.5L50.4 54.3V50.7Z" fill="#000"/><path d="M15.5 52.5C18 49 21 47.6 24 47C28 46.2 30.5 46.2 32 44.5C34.5 41 35.5 33.5 39 30.3C42 27.6 46 27 50.5 26.2" fill="none" stroke="#1c5fc4" stroke-width="1.3" stroke-linecap="round"/></svg></div>
<div class="fl" style="left:1026px;top:446px;">Q_Qtau.csv</div>
<div class="ic" style="left:44px;top:479px;"><svg width="64" height="64" viewBox="0 0 64 64" style="display:block;"><path d="M9.55 1.9H48L56.1 10V62.1H9.55Z" fill="#fff" stroke="#000" stroke-width="1.8" stroke-linejoin="miter"/><path d="M48 1.9V10H56.1" fill="none" stroke="#000" stroke-width="1.8"/><path d="M15.5 17V52.5H52" fill="none" stroke="#000" stroke-width="1.1"/><path d="M15.5 14.8L17.3 18.6H13.7Z M54.2 52.5L50.4 54.3V50.7Z" fill="#000"/><path d="M15.5 52.5C18 49 21 47.6 24 47C28 46.2 30.5 46.2 32 44.5C34.5 41 35.5 33.5 39 30.3C42 27.6 46 27 50.5 26.2" fill="none" stroke="#1c5fc4" stroke-width="1.3" stroke-linecap="round"/></svg></div>
<div class="fl" style="left:26px;top:552px;">Q_trap_fil<wbr>ling.csv</div>
<div class="ic" style="left:144px;top:479px;"><svg width="64" height="64" viewBox="0 0 64 64" style="display:block;"><path d="M9.55 1.9H48L56.1 10V62.1H9.55Z" fill="#fff" stroke="#000" stroke-width="1.8" stroke-linejoin="miter"/><path d="M48 1.9V10H56.1" fill="none" stroke="#000" stroke-width="1.8"/><text x="31" y="36.5" text-anchor="middle" font-family="DejaVu Sans, Liberation Sans, sans-serif" font-size="25" fill="#000">{:}</text></svg></div>
<div class="fl" style="left:126px;top:552px;">sim_info.dat</div>
<div class="ic" style="left:244px;top:479px;"><svg width="64" height="64" viewBox="0 0 64 64" style="display:block;"><path d="M4.4 11.4L15.1 13.1L15.1 42.3L4.4 46.0Z" fill="#e4e4e4" stroke="#222" stroke-width="1.3" stroke-linejoin="miter"/><path d="M7.4 16V41.6L14.3 39.4" fill="none" stroke="#4a4a4a" stroke-width="0.8"/><path d="M7.4 41.3C8 39 9.5 37.6 11.5 36.8C13.5 36 14.3 34 14.6 30L15 24" fill="none" stroke="#1414ff" stroke-width="0.95"/><path d="M15.1 12.4L22.9 14.8L22.9 43.3L15.1 46.7Z" fill="#e4e4e4" stroke="#222" stroke-width="1.3" stroke-linejoin="miter"/><path d="M17.6 16V41.6L22.1 39.4" fill="none" stroke="#4a4a4a" stroke-width="0.8"/><path d="M17.6 41.3C18 39.5 19 38.2 20.5 37.6C22 37 22.5 35 22.7 28" fill="none" stroke="#ff1414" stroke-width="0.95"/><path d="M22.9 12.4L31.9 15.8L31.9 40.3L22.9 46.7Z" fill="#e4e4e4" stroke="#222" stroke-width="1.3" stroke-linejoin="miter"/><path d="M25.2 16V41.6L31.1 39.4" fill="none" stroke="#4a4a4a" stroke-width="0.8"/><path d="M24.8 41.6C25.2 39.5 26.5 38.5 27.4 37.8C28.3 37 28.1 32 28.4 28C28.7 23 28.8 20 30 19" fill="none" stroke="#30f030" stroke-width="0.95"/><path d="M32.3 15.8L40.7 12.4L40.7 46.7L32.3 40.3Z" fill="#e4e4e4" stroke="#222" stroke-width="1.3" stroke-linejoin="miter"/><path d="M38.3 16V41.6L33.1 39.4" fill="none" stroke="#4a4a4a" stroke-width="0.8"/><path d="M33.9 19.1C35.3 20 35.6 22 35.8 26C36 30 36 34 36.5 36C37.2 38 39 39 39.7 41.3" fill="none" stroke="#ff30ff" stroke-width="0.95"/><path d="M41.0 14.8L49.4 12.4L49.4 46.7L41.0 43.3Z" fill="#e4e4e4" stroke="#222" stroke-width="1.3" stroke-linejoin="miter"/><path d="M47.3 16V41.6L41.8 39.4" fill="none" stroke="#4a4a4a" stroke-width="0.8"/><path d="M41.5 24C41.8 30 41.9 34 42.6 36C43.5 38 45.5 39 46.4 41.3" fill="none" stroke="#a818a8" stroke-width="0.95"/><path d="M49.7 13.7L59.8 12.4L59.8 46.0L49.7 42.3Z" fill="#e4e4e4" stroke="#222" stroke-width="1.3" stroke-linejoin="miter"/><path d="M57.3 16V41.6L50.5 39.4" fill="none" stroke="#4a4a4a" stroke-width="0.8"/><path d="M49.6 22C50.2 28 50.3 33 51.2 35.8C52.5 38 55.5 39.5 56.8 42" fill="none" stroke="#18188c" stroke-width="0.95"/><path d="M4.4 11.4L15.1 13.1L15.1 42.3L4.4 46.0Z" fill="none" stroke="#222" stroke-width="1.3" stroke-linejoin="miter"/><path d="M15.1 12.4L22.9 14.8L22.9 43.3L15.1 46.7Z" fill="none" stroke="#222" stroke-width="1.3" stroke-linejoin="miter"/><path d="M22.9 12.4L31.9 15.8L31.9 40.3L22.9 46.7Z" fill="none" stroke="#222" stroke-width="1.3" stroke-linejoin="miter"/><path d="M32.3 15.8L40.7 12.4L40.7 46.7L32.3 40.3Z" fill="none" stroke="#222" stroke-width="1.3" stroke-linejoin="miter"/><path d="M41.0 14.8L49.4 12.4L49.4 46.7L41.0 43.3Z" fill="none" stroke="#222" stroke-width="1.3" stroke-linejoin="miter"/><path d="M49.7 13.7L59.8 12.4L59.8 46.0L49.7 42.3Z" fill="none" stroke="#222" stroke-width="1.3" stroke-linejoin="miter"/></svg></div>
<div class="fl" style="left:226px;top:552px;">snapshots</div>
<div class="ic" style="left:344px;top:479px;"><svg width="64" height="64" viewBox="0 0 64 64" style="display:block;"><path d="M9.55 1.9H48L56.1 10V62.1H9.55Z" fill="#fff" stroke="#000" stroke-width="1.8" stroke-linejoin="miter"/><path d="M48 1.9V10H56.1" fill="none" stroke="#000" stroke-width="1.8"/><path d="M15.5 17V52.5H52" fill="none" stroke="#000" stroke-width="1.1"/><path d="M15.5 14.8L17.3 18.6H13.7Z M54.2 52.5L50.4 54.3V50.7Z" fill="#000"/><path d="M15.5 52.5C18 49 21 47.6 24 47C28 46.2 30.5 46.2 32 44.5C34.5 41 35.5 33.5 39 30.3C42 27.6 46 27 50.5 26.2" fill="none" stroke="#1c5fc4" stroke-width="1.3" stroke-linecap="round"/></svg></div>
<div class="fl" style="left:326px;top:552px;">suns_mu.csv</div>
<div class="ic" style="left:444px;top:479px;"><svg width="64" height="64" viewBox="0 0 64 64" style="display:block;"><path d="M9.55 1.9H48L56.1 10V62.1H9.55Z" fill="#fff" stroke="#000" stroke-width="1.8" stroke-linejoin="miter"/><path d="M48 1.9V10H56.1" fill="none" stroke="#000" stroke-width="1.8"/><path d="M15.5 17V52.5H52" fill="none" stroke="#000" stroke-width="1.1"/><path d="M15.5 14.8L17.3 18.6H13.7Z M54.2 52.5L50.4 54.3V50.7Z" fill="#000"/><path d="M15.5 52.5C18 49 21 47.6 24 47C28 46.2 30.5 46.2 32 44.5C34.5 41 35.5 33.5 39 30.3C42 27.6 46 27 50.5 26.2" fill="none" stroke="#1c5fc4" stroke-width="1.3" stroke-linecap="round"/></svg></div>
<div class="fl" style="left:426px;top:552px;">suns_Q.csv</div>
<div class="ic" style="left:544px;top:479px;"><svg width="64" height="64" viewBox="0 0 64 64" style="display:block;"><path d="M9.55 1.9H48L56.1 10V62.1H9.55Z" fill="#fff" stroke="#000" stroke-width="1.8" stroke-linejoin="miter"/><path d="M48 1.9V10H56.1" fill="none" stroke="#000" stroke-width="1.8"/><path d="M15.5 17V52.5H52" fill="none" stroke="#000" stroke-width="1.1"/><path d="M15.5 14.8L17.3 18.6H13.7Z M54.2 52.5L50.4 54.3V50.7Z" fill="#000"/><path d="M15.5 52.5C18 49 21 47.6 24 47C28 46.2 30.5 46.2 32 44.5C34.5 41 35.5 33.5 39 30.3C42 27.6 46 27 50.5 26.2" fill="none" stroke="#1c5fc4" stroke-width="1.3" stroke-linecap="round"/></svg></div>
<div class="fl" style="left:526px;top:552px;">suns_Q_con<wbr>tact.csv</div>
<div class="ic" style="left:644px;top:479px;"><svg width="64" height="64" viewBox="0 0 64 64" style="display:block;"><path d="M9.55 1.9H48L56.1 10V62.1H9.55Z" fill="#fff" stroke="#000" stroke-width="1.8" stroke-linejoin="miter"/><path d="M48 1.9V10H56.1" fill="none" stroke="#000" stroke-width="1.8"/><path d="M15.5 17V52.5H52" fill="none" stroke="#000" stroke-width="1.1"/><path d="M15.5 14.8L17.3 18.6H13.7Z M54.2 52.5L50.4 54.3V50.7Z" fill="#000"/><path d="M15.5 52.5C18 49 21 47.6 24 47C28 46.2 30.5 46.2 32 44.5C34.5 41 35.5 33.5 39 30.3C42 27.6 46 27 50.5 26.2" fill="none" stroke="#1c5fc4" stroke-width="1.3" stroke-linecap="round"/></svg></div>
<div class="fl" style="left:626px;top:552px;">suns_tau.csv</div>
<div class="ic" style="left:744px;top:479px;"><svg width="64" height="64" viewBox="0 0 64 64" style="display:block;"><path d="M9.55 1.9H48L56.1 10V62.1H9.55Z" fill="#fff" stroke="#000" stroke-width="1.8" stroke-linejoin="miter"/><path d="M48 1.9V10H56.1" fill="none" stroke="#000" stroke-width="1.8"/><path d="M15.5 17V52.5H52" fill="none" stroke="#000" stroke-width="1.1"/><path d="M15.5 14.8L17.3 18.6H13.7Z M54.2 52.5L50.4 54.3V50.7Z" fill="#000"/><path d="M15.5 52.5C18 49 21 47.6 24 47C28 46.2 30.5 46.2 32 44.5C34.5 41 35.5 33.5 39 30.3C42 27.6 46 27 50.5 26.2" fill="none" stroke="#1c5fc4" stroke-width="1.3" stroke-linecap="round"/></svg></div>
<div class="fl" style="left:726px;top:552px;">suns_voc.csv</div>
<div class="ic" style="left:844px;top:479px;"><svg width="64" height="64" viewBox="0 0 64 64" style="display:block;"><path d="M9.55 1.9H48L56.1 10V62.1H9.55Z" fill="#fff" stroke="#000" stroke-width="1.8" stroke-linejoin="miter"/><path d="M48 1.9V10H56.1" fill="none" stroke="#000" stroke-width="1.8"/><path d="M15.5 17V52.5H52" fill="none" stroke="#000" stroke-width="1.1"/><path d="M15.5 14.8L17.3 18.6H13.7Z M54.2 52.5L50.4 54.3V50.7Z" fill="#000"/><path d="M15.5 52.5C18 49 21 47.6 24 47C28 46.2 30.5 46.2 32 44.5C34.5 41 35.5 33.5 39 30.3C42 27.6 46 27 50.5 26.2" fill="none" stroke="#1c5fc4" stroke-width="1.3" stroke-linecap="round"/></svg></div>
<div class="fl" style="left:826px;top:552px;">V_mu.csv</div>

<div id="status">/home/rod/Desktop/dassd</div>
<svg class="ic" style="left:1188px;top:785px;" width="12" height="12" viewBox="0 0 12 12"><g fill="#c4c4c4"><rect x="9" y="1" width="1" height="1"/><rect x="9" y="4" width="1" height="1"/><rect x="6" y="4" width="1" height="1"/><rect x="9" y="7" width="1" height="1"/><rect x="6" y="7" width="1" height="1"/><rect x="3" y="7" width="1" height="1"/><rect x="9" y="10" width="1" height="1"/><rect x="6" y="10" width="1" height="1"/><rect x="3" y="10" width="1" height="1"/><rect x="0" y="10" width="1" height="1"/></g></svg>
</div>
</body>
</html>
